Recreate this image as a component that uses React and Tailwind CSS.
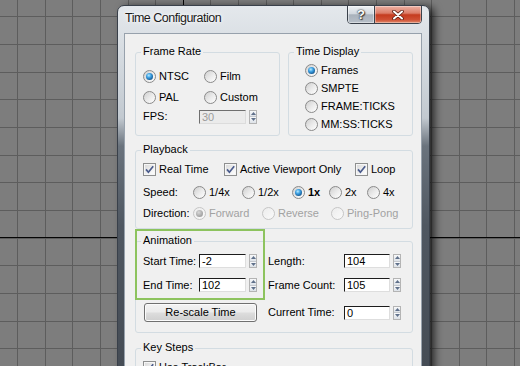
import React from "react";

const xs = Array.from({ length: 19 }, (_, k) => Math.round(17.2 + 27.6 * k));
const ys = Array.from({ length: 14 }, (_, k) => Math.round(16.4 + 27.65 * k));

function Grid() {
  return (
    <svg className="absolute inset-0" width="520" height="366" viewBox="0 0 520 366">
      {xs.map((x) => (
        <rect key={"v" + x} x={x} y={0} width={1} height={366} fill="#5d5d5d" />
      ))}
      {ys.map((y) => (
        <rect key={"h" + y} x={0} y={y} width={520} height={1} fill="#5d5d5d" />
      ))}
      <rect x={183} y={0} width={1} height={366} fill="#050505" />
      <rect x={0} y={237} width={520} height={1} fill="#050505" />
    </svg>
  );
}

function Radio({ checked, disabled }) {
  return (
    <span
      className={`flex h-[13px] w-[13px] shrink-0 items-center justify-center rounded-full border ${
        disabled
          ? "border-[#c6c6c6] bg-[linear-gradient(135deg,#ececec,#fafafa)]"
          : "border-[#8a8a8a] bg-[linear-gradient(135deg,#cfcfcf_0%,#ececec_55%,#ffffff_100%)]"
      }`}
    >
      {checked && (
        <span
          className={`h-[7px] w-[7px] rounded-full ${
            disabled
              ? "bg-[radial-gradient(circle_at_40%_35%,#d8d8d8_0%,#a9a9a9_60%,#8f8f8f_100%)]"
              : "bg-[radial-gradient(circle_at_40%_35%,#b8ecff_0%,#3fa2e4_35%,#145a94_75%,#0c3763_100%)]"
          }`}
        />
      )}
    </span>
  );
}

function RadioItem({ w = "", checked, disabled, bold, children }) {
  return (
    <span className={`flex items-center ${w}`}>
      <Radio checked={checked} disabled={disabled} />
      <span
        className={`ml-[3px] whitespace-nowrap ${disabled ? "text-[#a2a2a2]" : "text-black"} ${
          bold ? "font-bold" : ""
        }`}
      >
        {children}
      </span>
    </span>
  );
}

function Check() {
  return (
    <span className="flex h-[13px] w-[13px] shrink-0 items-center justify-center border border-[#8e8f8f] bg-[linear-gradient(135deg,#d6d6d6_0%,#f2f2f2_60%,#ffffff_100%)] shadow-[inset_0_0_0_1px_#f6f6f6]">
      <svg width="11" height="11" viewBox="0 0 11 11">
        <path d="M2 5.4 L4.4 8.2 L9.2 2.2" fill="none" stroke="#4a5b8c" strokeWidth="1.7" />
      </svg>
    </span>
  );
}

function CheckItem({ w = "", children }) {
  return (
    <span className={`flex items-center ${w}`}>
      <Check />
      <span className="ml-[3px] whitespace-nowrap">{children}</span>
    </span>
  );
}

function Spin() {
  return (
    <span className="ml-[3px] flex h-[14px] w-[8px] shrink-0 flex-col border border-[#b4b4b4] bg-[#eef0f3]">
      <span className="flex flex-1 items-center justify-center border-b border-[#c4c8ce] bg-[linear-gradient(180deg,#f8f9fa,#dde2e8)]">
        <svg width="5" height="3" viewBox="0 0 5 3">
          <path d="M0 3 L2.5 0 L5 3Z" fill="#5f708a" />
        </svg>
      </span>
      <span className="flex flex-1 items-center justify-center bg-[linear-gradient(180deg,#f8f9fa,#dde2e8)]">
        <svg width="5" height="3" viewBox="0 0 5 3">
          <path d="M0 0 L5 0 L2.5 3Z" fill="#5f708a" />
        </svg>
      </span>
    </span>
  );
}

function Field({ w, disabled, children }) {
  return (
    <span
      className={`flex h-[14px] shrink-0 items-center border pl-[2px] leading-[12px] ${w} ${
        disabled
          ? "border-t-[#6f6f6f] border-l-[#6f6f6f] border-r-[#dcdcdc] border-b-[#dcdcdc] bg-[#ebebeb] text-[#9c9c9c]"
          : "border-t-[#1c1c1c] border-l-[#1c1c1c] border-r-[#dedede] border-b-[#dedede] bg-white text-black"
      }`}
    >
      {children}
    </span>
  );
}

function Group({ label, className = "", children }) {
  return (
    <div className={`relative shrink-0 rounded-[3px] border border-[#d3dce2] ${className}`}>
      <span className="absolute left-[5px] top-[-8px] bg-[#f0f0f0] px-[2px] leading-[13px]">{label}</span>
      {children}
    </div>
  );
}

function CaptionButtons() {
  return (
    <div className="-mt-px flex h-[19px] w-[75px] shrink-0 overflow-hidden rounded-b-[4px] border border-[#3a414b]">
      <div className="flex h-full w-[27px] items-center justify-center border-r border-[#3a414b] bg-[linear-gradient(180deg,#eef1f4_0%,#d2d8df_45%,#a9b2bc_52%,#b7bfc8_100%)] shadow-[inset_0_0_0_1px_rgba(255,255,255,0.45)]">
        <span className="text-[13px] font-bold leading-[13px] text-white [text-shadow:0_0_1px_#222,0_0_2px_#333,1px_1px_1px_#444]">
          ?
        </span>
      </div>
      <div className="flex h-full flex-1 items-center justify-center bg-[linear-gradient(180deg,#ecb1a4_0%,#dc7d68_42%,#c53b1f_52%,#cf4f33_80%,#e08a6c_100%)] shadow-[inset_0_0_0_1px_rgba(255,255,255,0.35)]">
        <svg width="12" height="10" viewBox="0 0 12 10">
          <path d="M2 1.5 L10 8.5 M10 1.5 L2 8.5" stroke="#5a1c10" strokeWidth="3.6" strokeLinecap="round" />
          <path d="M2 1.5 L10 8.5 M10 1.5 L2 8.5" stroke="#ffffff" strokeWidth="2" strokeLinecap="round" />
        </svg>
      </div>
    </div>
  );
}

export default function App() {
  return (
    <div className="relative h-[366px] w-[520px] overflow-hidden bg-[#7d7d7d] font-['Liberation_Sans',Arial,sans-serif] text-[11px] leading-[13px] text-black">
      <Grid />
      <div className="absolute left-[117px] top-[5px] flex h-[372px] w-[313px] flex-col rounded-t-[7px] border border-[#39404a] bg-[linear-gradient(180deg,#e4e8ec_0px,#d2d8de_60px,#c2c9d0_112px,#6a737d_140px,#4f5761_220px,#444b54_372px)] shadow-[5px_1px_8px_-1px_rgba(0,0,0,0.75)]">
        <div className="flex h-[27px] shrink-0 items-start justify-between pl-[7px] pr-[7px]">
          <span className="pt-[5px] text-[12.5px] leading-[15px] tracking-[-0.5px] text-[#1a1a1a] [text-shadow:0_0_6px_#fff,0_0_3px_#fff]">
            Time Configuration
          </span>
          <CaptionButtons />
        </div>
        <div className="ml-[6px] mr-[7px] flex flex-1 flex-col overflow-hidden border border-[#97a1ac] bg-[#f0f0f0] pl-[10px]">
          {/* Row 1 */}
          <div className="mt-[18px] flex gap-[8px]">
            <Group label="Frame Rate" className="h-[84px] w-[145px] pl-[7px] pt-[15px]">
              <div className="flex h-[16px] items-center">
                <RadioItem w="w-[61px]" checked>
                  NTSC
                </RadioItem>
                <RadioItem>Film</RadioItem>
              </div>
              <div className="mt-[5px] flex h-[16px] items-center">
                <RadioItem w="w-[61px]">PAL</RadioItem>
                <RadioItem>Custom</RadioItem>
              </div>
              <div className="mt-[4px] flex h-[15px] items-center">
                <span className="w-[56px]">FPS:</span>
                <Field w="w-[47px]" disabled>
                  30
                </Field>
                <Spin />
              </div>
            </Group>
            <Group label="Time Display" className="h-[84px] w-[125px] pl-[16px] pt-[8px]">
              <div className="flex h-[18px] items-center">
                <RadioItem checked>Frames</RadioItem>
              </div>
              <div className="flex h-[18px] items-center">
                <RadioItem>SMPTE</RadioItem>
              </div>
              <div className="flex h-[18px] items-center">
                <RadioItem>FRAME:TICKS</RadioItem>
              </div>
              <div className="flex h-[18px] items-center">
                <RadioItem>MM:SS:TICKS</RadioItem>
              </div>
            </Group>
          </div>

          {/* Playback */}
          <Group label="Playback" className="mt-[14px] h-[79px] w-[278px] pl-[7px] pt-[10px]">
            <div className="flex h-[16px] items-center">
              <CheckItem w="w-[81px]">Real Time</CheckItem>
              <CheckItem w="w-[131px]">Active Viewport Only</CheckItem>
              <CheckItem>Loop</CheckItem>
            </div>
            <div className="mt-[7px] flex h-[16px] items-center">
              <span className="w-[50px]">Speed:</span>
              <RadioItem w="w-[49px]">1/4x</RadioItem>
              <RadioItem w="w-[50px]">1/2x</RadioItem>
              <RadioItem w="w-[37px]" checked bold>
                1x
              </RadioItem>
              <RadioItem w="w-[38px]">2x</RadioItem>
              <RadioItem>4x</RadioItem>
            </div>
            <div className="mt-[5px] flex h-[16px] items-center">
              <span className="w-[50px]">Direction:</span>
              <RadioItem w="w-[69px]" checked disabled>
                Forward
              </RadioItem>
              <RadioItem w="w-[69px]" disabled>
                Reverse
              </RadioItem>
              <RadioItem disabled>Ping-Pong</RadioItem>
            </div>
          </Group>

          {/* Animation */}
          <Group label="Animation" className="mt-[12px] h-[92px] w-[278px] pl-[7px] pt-[12px]">
            <div className="flex h-[14px] items-center">
              <div className="flex w-[125px] items-center">
                <span className="w-[56px] whitespace-nowrap">Start Time:</span>
                <Field w="w-[47px]">-2</Field>
                <Spin />
              </div>
              <div className="flex items-center">
                <span className="w-[76px] whitespace-nowrap">Length:</span>
                <Field w="w-[46px]">104</Field>
                <Spin />
              </div>
            </div>
            <div className="mt-[10px] flex h-[14px] items-center">
              <div className="flex w-[125px] items-center">
                <span className="w-[56px] whitespace-nowrap">End Time:</span>
                <Field w="w-[47px]">102</Field>
                <Spin />
              </div>
              <div className="flex items-center">
                <span className="w-[76px] whitespace-nowrap">Frame Count:</span>
                <Field w="w-[46px]">105</Field>
                <Spin />
              </div>
            </div>
            <div className="mt-[11px] flex h-[19px] items-center">
              <div className="flex w-[125px] items-center">
                <button className="ml-[1px] flex h-[19px] w-[113px] items-center justify-center rounded-[3px] border border-[#707070] bg-[linear-gradient(180deg,#f3f3f3_0%,#ebebeb_48%,#dddddd_52%,#cfcfcf_100%)] text-[11px] leading-[13px] text-black shadow-[inset_0_0_0_1px_#fbfbfb]">
                  Re-scale Time
                </button>
              </div>
              <div className="flex items-center">
                <span className="w-[76px] whitespace-nowrap">Current Time:</span>
                <Field w="w-[46px]">0</Field>
                <Spin />
              </div>
            </div>
            <div className="pointer-events-none absolute left-[-1px] top-[-13px] h-[71px] w-[130px] border-2 border-[#8dc35e]" />
          </Group>

          {/* Key Steps */}
          <Group label="Key Steps" className="mt-[15px] h-[60px] w-[278px] pl-[7px] pt-[10px]">
            <div className="flex h-[16px] items-center">
              <CheckItem>Use TrackBar</CheckItem>
            </div>
          </Group>
        </div>
      </div>
    </div>
  );
}
